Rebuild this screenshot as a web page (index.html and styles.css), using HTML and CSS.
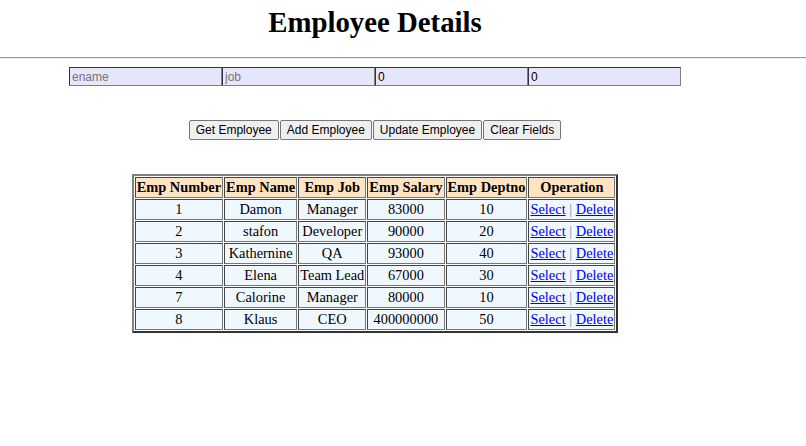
FILE: index.html
```html
<!DOCTYPE html>
<html>
<head>
<meta charset="utf-8">
<title>Employee Details</title>
<link rel="stylesheet" href="styles.css">
</head>
<body>
<div class="page">
  <h1 class="title">Employee Details</h1>
</div>
<hr class="rule">
<div class="page">
  <div class="fields">
    <input class="field" type="text" placeholder="ename">
    <input class="field" type="text" placeholder="job">
    <input class="field" type="text" value="0">
    <input class="field" type="text" value="0">
  </div>
  <div class="actions">
    <button class="btn">Get Employee</button>
    <button class="btn">Add Employee</button>
    <button class="btn">Update Employee</button>
    <button class="btn">Clear Fields</button>
  </div>
  <table class="grid">
    <thead>
      <tr>
        <th>Emp Number</th><th>Emp Name</th><th>Emp Job</th><th>Emp Salary</th><th>Emp Deptno</th><th>Operation</th>
      </tr>
    </thead>
    <tbody>
      <tr><td>1</td><td>Damon</td><td>Manager</td><td>83000</td><td>10</td><td><a href="#">Select</a> <span class="sep">|</span> <a href="#">Delete</a></td></tr>
      <tr><td>2</td><td>stafon</td><td>Developer</td><td>90000</td><td>20</td><td><a href="#">Select</a> <span class="sep">|</span> <a href="#">Delete</a></td></tr>
      <tr><td>3</td><td>Kathernine</td><td>QA</td><td>93000</td><td>40</td><td><a href="#">Select</a> <span class="sep">|</span> <a href="#">Delete</a></td></tr>
      <tr><td>4</td><td>Elena</td><td>Team Lead</td><td>67000</td><td>30</td><td><a href="#">Select</a> <span class="sep">|</span> <a href="#">Delete</a></td></tr>
      <tr><td>7</td><td>Calorine</td><td>Manager</td><td>80000</td><td>10</td><td><a href="#">Select</a> <span class="sep">|</span> <a href="#">Delete</a></td></tr>
      <tr><td>8</td><td>Klaus</td><td>CEO</td><td>400000000</td><td>50</td><td><a href="#">Select</a> <span class="sep">|</span> <a href="#">Delete</a></td></tr>
    </tbody>
  </table>
</div>
</body>
</html>
```
FILE: styles.css
```css
html, body {
  margin: 0;
  padding: 0;
  background: #ffffff;
  font-family: "Liberation Serif", "Times New Roman", serif;
  color: #000;
}

.page {
  width: 750px;
  display: flex;
  flex-direction: column;
  align-items: center;
}

.title {
  margin: 6px 0 0;
  font-size: 28.8px;
  line-height: 33px;
  font-weight: bold;
  text-align: center;
}

.rule {
  margin: 18px 0 0;
  border: 0;
  border-top: 1px solid #9a9a9a;
  border-bottom: 1px solid #eeeeee;
  height: 0;
}

.fields {
  margin-top: 8px;
  display: flex;
}

.field {
  box-sizing: border-box;
  width: 153px;
  height: 19px;
  margin: 0;
  padding: 1px 2px;
  background: #e6e6fa;
  border: 1px solid;
  border-color: #333333 #808080 #808080 #333333;
  font-family: "Liberation Sans", Arial, sans-serif;
  font-size: 12px;
  color: #000;
  outline: none;
}

.field::placeholder {
  color: #757575;
}

.actions {
  margin-top: 34px;
  display: flex;
  gap: 1px;
}

.btn {
  margin: 0;
  padding: 2px 6px;
  height: 20px;
  box-sizing: border-box;
  font-family: "Liberation Sans", Arial, sans-serif;
  font-size: 12px;
  line-height: 14px;
  color: #000;
  background: #efefef;
  border: 1px solid #767676;
  border-radius: 2px;
}

.grid {
  margin-top: 34px;
  border-collapse: separate;
  border-spacing: 1px;
  border: 2px solid;
  border-color: #808080 #333333 #333333 #808080;
  font-size: 14.4px;
}

.grid th,
.grid td {
  padding: 1px 1px;
  line-height: 17px;
  text-align: center;
  border: 1px solid;
  border-color: #444444 #777777 #777777 #444444;
  white-space: nowrap;
}

.grid th {
  background: #ffe4c4;
  font-weight: bold;
}

.grid td {
  background: #f0f8ff;
}

.grid a {
  color: #0000ee;
  text-decoration: underline;
}

.sep {
  color: #7a8a9a;
}
```
